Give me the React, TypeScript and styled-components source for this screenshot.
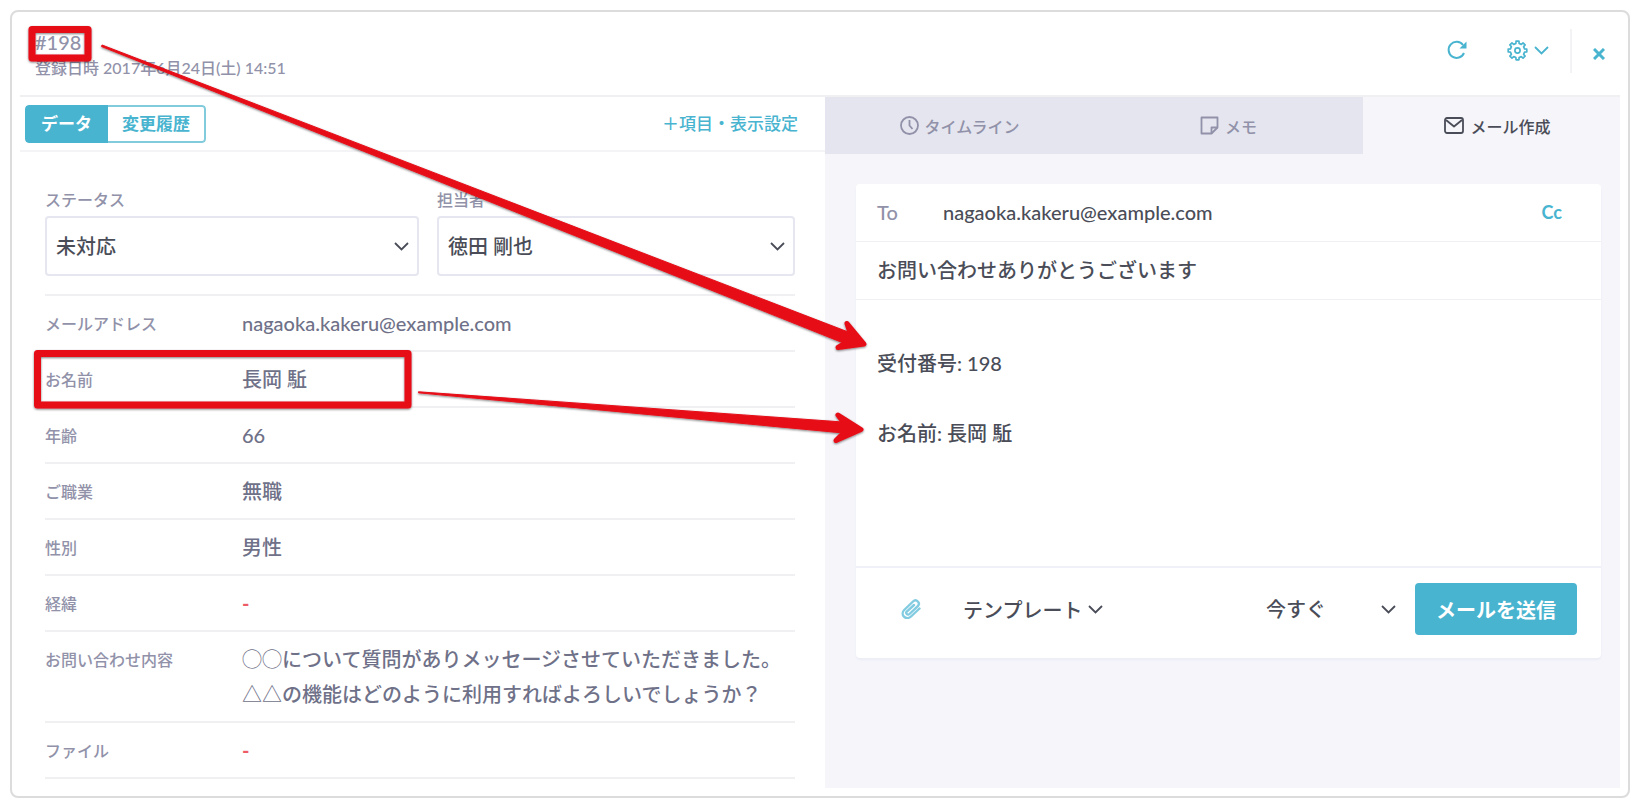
import React from "react";
import styled, { createGlobalStyle, css } from "styled-components";

const teal = "#49b4cf";
const ink = "#4a4d58";
const slate = "#6f7188";
const muted = "#9192a9";

const GlobalStyle = createGlobalStyle`
  *, *::before, *::after { box-sizing: border-box; }
  body { margin: 0; background: #fff; }
  body, button, input, select, textarea {
    font-family: Lato, "Noto Sans CJK JP", sans-serif;
    font-weight: 500;
  }
  button, input, select, textarea {
    border: 0;
    margin: 0;
    padding: 0;
    background: none;
    color: inherit;
  }
  button { cursor: pointer; }
  dl, dd, p, h1 { margin: 0; }
`;

const Page = styled.div`
  position: relative;
  padding: 10px 14px 14px 10px;
  color: ${ink};
`;

const Frame = styled.main`
  border: 2px solid #dcdcdc;
  border-radius: 8px;
  padding: 8px;
`;

const Window = styled.div`
  overflow: hidden;
`;

const Header = styled.header`
  display: flex;
  justify-content: space-between;
  height: 77px;
  padding: 9px 12px 0 15px;
  border-bottom: 2px solid #f0f0f2;
`;

const TicketNumber = styled.h1`
  font-size: 20px;
  line-height: 26px;
  font-weight: 500;
  color: ${muted};
`;

const Registered = styled.p`
  font-size: 16px;
  line-height: 26px;
  color: ${muted};
`;

const Tools = styled.div`
  display: flex;
  align-items: flex-start;
  color: ${teal};
`;

const ToolButton = styled.button<{ $gap?: number }>`
  display: flex;
  align-items: center;
  gap: 6px;
  height: 42px;
  margin-right: ${(p) => p.$gap ?? 0}px;
`;

const CloseArea = styled.div`
  height: 44px;
  padding: 4px 3px 0 21px;
  border-left: 2px solid #f3f3f5;
`;

const Body = styled.div`
  display: flex;
`;

const DataPane = styled.section`
  flex: 805 1 0;
  min-width: 0;
`;

const ModeBar = styled.div`
  display: flex;
  align-items: center;
  justify-content: space-between;
  height: 55px;
  padding: 0 27px 0 5px;
  border-bottom: 2px solid #f4f4f6;
`;

const Segments = styled.div`
  display: flex;
  border-radius: 4px;
  overflow: hidden;
`;

const Segment = styled.button<{ $active?: boolean }>`
  height: 38px;
  padding: 0 14px;
  border: 2px solid ${(p) => (p.$active ? teal : "#82cbdd")};
  border-left-width: ${(p) => (p.$active ? 2 : 0)}px;
  border-radius: ${(p) => (p.$active ? "4px 0 0 4px" : "0 4px 4px 0")};
  font-size: 17px;
  line-height: 34px;
  font-weight: 700;
  color: ${(p) => (p.$active ? "#fff" : teal)};
  background: ${(p) => (p.$active ? teal : "#fff")};
`;

const SettingsLink = styled.a`
  font-size: 17px;
  line-height: 24px;
  color: ${teal};
  text-decoration: none;
`;

const Fields = styled.div`
  padding: 36px 30px 9px 25px;
`;

const SelectRow = styled.div`
  display: flex;
  gap: 18px;
  padding-bottom: 18px;
  border-bottom: 2px solid #f0f0f2;
`;

const Field = styled.div<{ $grow: number }>`
  flex: ${(p) => p.$grow} 1 0;
  min-width: 0;
`;

const FieldLabel = styled.label`
  display: block;
  font-size: 16px;
  line-height: 24px;
  margin-bottom: 4px;
  color: ${muted};
`;

const SelectShell = styled.div`
  display: flex;
  align-items: center;
  position: relative;

  svg {
    position: absolute;
    right: 10px;
    pointer-events: none;
  }
`;

const selectText = css`
  appearance: none;
  width: 100%;
  font-size: 20px;
  color: ${ink};
`;

const BoxedSelect = styled.select`
  ${selectText}
  height: 60px;
  padding: 0 36px 0 9px;
  border: 2px solid #e6e6f1;
  border-radius: 4px;
`;

const Entries = styled.dl``;

const Entry = styled.div`
  display: flex;
  padding: 10px 0 9px;
  border-bottom: 2px solid #f0f0f2;
`;

const EntryName = styled.dt`
  flex: 0 0 197px;
  font-size: 16px;
  line-height: 35px;
  color: ${muted};
`;

const EntryValue = styled.dd<{ $missing?: boolean }>`
  min-width: 0;
  font-size: 20px;
  line-height: 35px;
  font-weight: ${(p) => (p.$missing ? 700 : 500)};
  white-space: pre-line;
  color: ${(p) => (p.$missing ? "#ec5b66" : slate)};
`;

const ActionPane = styled.section`
  flex: 807 1 0;
  min-width: 0;
  margin-right: -12px;
  background: #f5f5fa;
`;

const TabList = styled.div`
  display: flex;
`;

const Tab = styled.button<{ $active?: boolean }>`
  flex: 1;
  display: flex;
  align-items: center;
  justify-content: center;
  gap: 6px;
  height: 57px;
  font-size: 16px;
  color: ${(p) => (p.$active ? ink : muted)};
  background: ${(p) => (p.$active ? "transparent" : "#e5e5ef")};
`;

const Composer = styled.form`
  margin: 30px 31px 0;
  border-radius: 4px;
  background: #fff;
  box-shadow: 0 2px 2px #ececf6;
`;

const ComposerLine = styled.div`
  display: flex;
  align-items: center;
  height: 58px;
  padding: 0 39px 2px 21px;
  border-bottom: 1px solid #f0f0f4;
`;

const ToLabel = styled.label`
  flex: 0 0 66px;
  font-size: 20px;
  color: ${muted};
`;

const TextInput = styled.input`
  flex: 1;
  min-width: 0;
  height: 35px;
  font-size: 20px;
  color: ${ink};
`;

const CcButton = styled.button`
  font-size: 18px;
  font-weight: 700;
  color: ${teal};
`;

const MessageBox = styled.textarea`
  display: block;
  width: 100%;
  height: 266px;
  padding: 46px 21px 0;
  resize: none;
  font-size: 20px;
  line-height: 35px;
  color: ${ink};
`;

const ComposerFooter = styled.div`
  display: flex;
  align-items: center;
  height: 92px;
  padding: 0 24px 8px 45px;
  border-top: 2px solid #f0f0f8;
`;

const AttachButton = styled.button`
  display: flex;
  margin-right: 42px;
  color: #82cbe0;
`;

const TemplateButton = styled.button`
  display: flex;
  align-items: center;
  gap: 6px;
  margin-right: auto;
  font-size: 20px;
`;

const TimingShell = styled(SelectShell)`
  width: 130px;
  margin-right: 19px;

  svg {
    right: 0;
  }
`;

const PlainSelect = styled.select`
  ${selectText}
  height: 40px;
`;

const SendButton = styled.button`
  height: 52px;
  padding: 0 21px;
  border-radius: 4px;
  font-size: 20px;
  font-weight: 700;
  color: #fff;
  background: ${teal};
`;

const Callouts = styled.svg`
  position: absolute;
  top: 0;
  left: 0;
  pointer-events: none;
  overflow: visible;
`;

const Chevron = () => (
  <svg width="15" height="10" viewBox="0 0 15 10" fill="none" stroke="currentColor" strokeWidth="1.8" aria-hidden="true">
    <path d="M1 2 7.5 8.500 14 2" />
  </svg>
);

const RefreshIcon = () => (
  <svg width="20" height="20" viewBox="0 0 20 20" fill="none" stroke="currentColor" strokeWidth="2" aria-hidden="true">
    <path d="M17 13A8 8 0 1 1 16 5" />
    <path d="M19.5 1.5V8.5H12.5Z" fill="currentColor" stroke="none" />
  </svg>
);

/* Outline of an eight-toothed gear centred on (10.5, 10.5). */
const gearOutline = Array.from({ length: 8 }, (_, tooth) =>
  [
    [-13, 7.2],
    [-9, 9.4],
    [9, 9.4],
    [13, 7.2],
  ]
    .map(([offset, radius]) => {
      const angle = ((tooth * 45 + offset) * Math.PI) / 180;
      return `${(10.5 + radius * Math.cos(angle)).toFixed(2)},${(10.5 + radius * Math.sin(angle)).toFixed(2)}`;
    })
    .join(" ")
).join(" ");

const GearIcon = () => (
  <svg width="21" height="21" viewBox="0 0 21 21" fill="none" stroke="currentColor" strokeWidth="1.7" strokeLinejoin="round" aria-hidden="true">
    <polygon points={gearOutline} />
    <circle cx="10.5" cy="10.5" r="2.6" />
  </svg>
);

const CloseIcon = () => (
  <svg width="12" height="12" viewBox="0 0 12 12" fill="none" stroke="currentColor" strokeWidth="3" aria-hidden="true">
    <path d="M1 1 11 11M11 1 1 11" />
  </svg>
);

const ClockIcon = () => (
  <svg width="19" height="19" viewBox="0 0 19 19" fill="none" stroke="currentColor" strokeWidth="1.8" aria-hidden="true">
    <circle cx="9.5" cy="9.5" r="8.5" />
    <path d="M9.5 4v5.5l3 3.5" />
  </svg>
);

const NoteIcon = () => (
  <svg width="19" height="19" viewBox="0 0 19 19" fill="none" stroke="currentColor" strokeWidth="1.8" strokeLinejoin="round" aria-hidden="true">
    <path d="M1.5 1.5h16v10l-6 6h-10Z" />
    <path d="M17.5 11.5h-6v6" />
  </svg>
);

const MailIcon = () => (
  <svg width="20" height="17" viewBox="0 0 20 17" fill="none" stroke="currentColor" strokeWidth="1.8" strokeLinejoin="round" aria-hidden="true">
    <rect x="1" y="1" width="18" height="15" rx="2" />
    <path d="M2 3 10 9.500l8-6.500" />
  </svg>
);

const ClipIcon = () => (
  <svg width="20" height="20" viewBox="0 0 20 20" fill="none" stroke="currentColor" strokeWidth="2.4" strokeLinecap="round" aria-hidden="true">
    <path d="M18.500 9.500 10 17.500c-2.200 2-5.200 2-7 .2s-1.800-4.700.2-6.700L12 2.500c1.400-1.300 3.500-1.300 4.800 0s1.300 3.300 0 4.600L8.500 15c-.8.8-2 .8-2.700 0s-.700-1.800 0-2.500L13 6" />
  </svg>
);

const entries = [
  { name: "メールアドレス", value: "nagaoka.kakeru@example.com" },
  { name: "お名前", value: "長岡 駈" },
  { name: "年齢", value: "66" },
  { name: "ご職業", value: "無職" },
  { name: "性別", value: "男性" },
  { name: "経緯", value: null },
  {
    name: "お問い合わせ内容",
    value: "◯◯について質問がありメッセージさせていただきました。\n△△の機能はどのように利用すればよろしいでしょうか？",
  },
  { name: "ファイル", value: null },
];

export default function App() {
  return (
    <Page>
      <GlobalStyle />
      <Frame>
        <Window>
          <Header>
            <div>
              <TicketNumber>#198</TicketNumber>
              <Registered>登録日時 2017年6月24日(土) 14:51</Registered>
            </div>
            <Tools>
              <ToolButton type="button" aria-label="更新" $gap={40}>
                <RefreshIcon />
              </ToolButton>
              <ToolButton type="button" aria-label="設定" $gap={21}>
                <GearIcon />
                <Chevron />
              </ToolButton>
              <CloseArea>
                <ToolButton type="button" aria-label="閉じる">
                  <CloseIcon />
                </ToolButton>
              </CloseArea>
            </Tools>
          </Header>
          <Body>
            <DataPane>
              <ModeBar>
                <Segments>
                  <Segment type="button" $active>
                    データ
                  </Segment>
                  <Segment type="button">変更履歴</Segment>
                </Segments>
                <SettingsLink href="#settings">＋項目・表示設定</SettingsLink>
              </ModeBar>
              <Fields>
                <SelectRow>
                  <Field $grow={374}>
                    <FieldLabel htmlFor="status">ステータス</FieldLabel>
                    <SelectShell>
                      <BoxedSelect id="status">
                        <option>未対応</option>
                      </BoxedSelect>
                      <Chevron />
                    </SelectShell>
                  </Field>
                  <Field $grow={358}>
                    <FieldLabel htmlFor="assignee">担当者</FieldLabel>
                    <SelectShell>
                      <BoxedSelect id="assignee">
                        <option>徳田 剛也</option>
                      </BoxedSelect>
                      <Chevron />
                    </SelectShell>
                  </Field>
                </SelectRow>
                <Entries>
                  {entries.map((entry) => (
                    <Entry key={entry.name}>
                      <EntryName>{entry.name}</EntryName>
                      <EntryValue $missing={entry.value === null}>{entry.value ?? "-"}</EntryValue>
                    </Entry>
                  ))}
                </Entries>
              </Fields>
            </DataPane>
            <ActionPane>
              <TabList role="tablist">
                <Tab type="button" role="tab" aria-selected={false}>
                  <ClockIcon />
                  タイムライン
                </Tab>
                <Tab type="button" role="tab" aria-selected={false}>
                  <NoteIcon />
                  メモ
                </Tab>
                <Tab type="button" role="tab" aria-selected $active>
                  <MailIcon />
                  メール作成
                </Tab>
              </TabList>
              <Composer>
                <ComposerLine>
                  <ToLabel htmlFor="to">To</ToLabel>
                  <TextInput id="to" defaultValue="nagaoka.kakeru@example.com" />
                  <CcButton type="button">Cc</CcButton>
                </ComposerLine>
                <ComposerLine>
                  <TextInput aria-label="件名" defaultValue="お問い合わせありがとうございます" />
                </ComposerLine>
                <MessageBox aria-label="本文" defaultValue={"受付番号: 198\n\nお名前: 長岡 駈"} />
                <ComposerFooter>
                  <AttachButton type="button" aria-label="添付">
                    <ClipIcon />
                  </AttachButton>
                  <TemplateButton type="button">
                    テンプレート
                    <Chevron />
                  </TemplateButton>
                  <TimingShell>
                    <PlainSelect aria-label="送信時刻">
                      <option>今すぐ</option>
                    </PlainSelect>
                    <Chevron />
                  </TimingShell>
                  <SendButton type="button">メールを送信</SendButton>
                </ComposerFooter>
              </Composer>
            </ActionPane>
          </Body>
        </Window>
      </Frame>
      <Callouts width="880" height="460" viewBox="0 0 880 460" aria-hidden="true">
        <defs>
          <filter id="lift" x="-5%" y="-10%" width="110%" height="125%">
            <feDropShadow dx="0" dy="1" stdDeviation="1" floodColor="#000" floodOpacity="0.5" />
          </filter>
        </defs>
        <g filter="url(#lift)" fill="none" stroke="#e60c19" strokeWidth="7" strokeLinejoin="round">
          <rect x="32" y="29.5" width="56" height="28.5" />
          <rect x="37.5" y="353.5" width="370.500" height="51.500" />
        </g>
        <g filter="url(#lift)" fill="#e60c19" stroke="#e60c19" strokeLinejoin="round">
          <path d="M102 45 856 335 851 346 101.5 46.5Z" strokeWidth="1" />
          <path d="M847 323.5 864 344 838 347.5 852 339Z" strokeWidth="5" />
          <path d="M418.5 391.8 850 422.500 849 433.500 418.5 392.8Z" strokeWidth="1" />
          <path d="M838 415 861 429.500 836 440.500 848 428.500Z" strokeWidth="5" />
        </g>
      </Callouts>
    </Page>
  );
}
